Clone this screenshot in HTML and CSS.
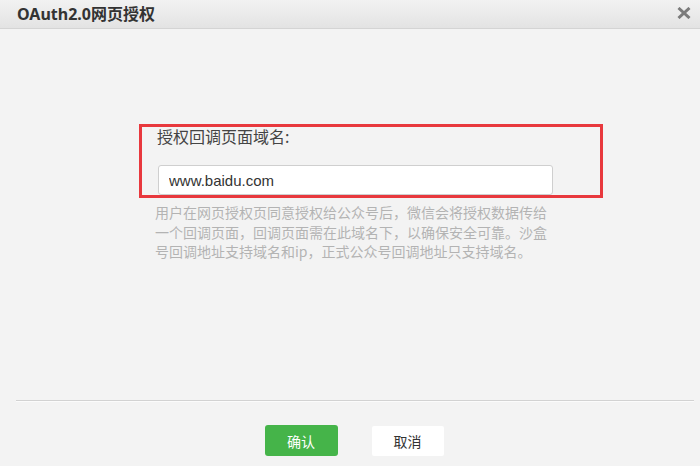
FILE: index.html
```html
<!DOCTYPE html>
<html lang="zh-CN">
<head>
<meta charset="utf-8">
<title>OAuth2.0网页授权</title>
<link rel="stylesheet" href="styles.css">
</head>
<body>
<div class="dialog">
  <div class="header">
    <h1 class="title">OAuth2.0网页授权</h1>
    <span class="close" aria-label="关闭">
      <svg width="14" height="12" viewBox="0 0 14 12"><path d="M1.5 1 L12.5 11 M12.5 1 L1.5 11" stroke="#7b7b7b" stroke-width="3" stroke-linecap="butt"/></svg>
    </span>
  </div>
  <div class="content">
    <div class="highlight">
      <div class="label">授权回调页面域名:</div>
      <input class="field" type="text" value="www.baidu.com">
    </div>
    <p class="help">用户在网页授权页同意授权给公众号后，微信会将授权数据传给一个回调页面，回调页面需在此域名下，以确保安全可靠。沙盒号回调地址支持域名和ip，正式公众号回调地址只支持域名。</p>
  </div>
  <div class="divider"></div>
  <div class="footer">
    <button class="btn btn-primary">确认</button>
    <button class="btn btn-default">取消</button>
  </div>
</div>
</body>
</html>
```
FILE: styles.css
```css
html, body {
  margin: 0;
  padding: 0;
  background: #f3f3f3;
}
body {
  font-family: "Noto Sans", "Noto Sans CJK SC", sans-serif;
  color: #333;
  width: 700px;
  height: 466px;
  overflow: hidden;
}
.dialog {
  display: flex;
  flex-direction: column;
  height: 466px;
}
.header {
  height: 28px;
  border-bottom: 1px solid #d4d4d4;
  background: linear-gradient(#f2f2f2, #e3e3e3);
  display: flex;
  align-items: center;
  justify-content: space-between;
  padding: 0 9px 0 17px;
}
.title {
  margin: 0;
  font-size: 16px;
  font-weight: bold;
  line-height: 24px;
  color: #333;
  font-family: "Noto Sans", "Noto Sans CJK SC", sans-serif;
}
.close {
  display: flex;
  width: 14px;
  height: 12px;
  margin-top: -2px;
}
.content {
  height: 371px;
  padding-top: 95px;
  box-sizing: border-box;
}
.highlight {
  margin-left: 139px;
  width: 458px;
  height: 68px;
  border: 3px solid #e8383d;
  box-sizing: content-box;
  display: flex;
  flex-direction: column;
  align-items: flex-start;
}
.label {
  margin-left: 15px;
  font-size: 16px;
  line-height: 18px;
  color: #444;
  font-family: "Noto Sans CJK SC", sans-serif;
}
.field {
  margin: 20px 0 0 16px;
  width: 395px;
  height: 30px;
  box-sizing: border-box;
  border: 1px solid #cfcfcf;
  border-radius: 3px;
  background: #fff;
  padding: 0 10px;
  font-family: "Liberation Sans", Arial, sans-serif;
  font-size: 15px;
  color: #333;
  outline: none;
}
.help {
  margin: 5px 0 0 155px;
  width: 395px;
  font-size: 14px;
  line-height: 19.5px;
  color: #b3b3b3;
  font-family: "Noto Sans CJK SC", sans-serif;
}
.divider {
  height: 1px;
  background: #d2d2d2;
  margin: 0 6px 0 16px;
  box-shadow: 0 1px 0 #fbfbfb;
}
.footer {
  display: flex;
  justify-content: center;
  align-items: flex-start;
  gap: 34px;
  padding: 24px 0 0 8px;
}
.btn {
  font-family: "Noto Sans CJK SC", sans-serif;
  font-size: 14px;
  border: none;
  border-radius: 3px;
  padding: 0;
  cursor: pointer;
}
.btn-primary {
  width: 73px;
  height: 31px;
  background: #45b449;
  color: #fff;
}
.btn-default {
  width: 72px;
  height: 30px;
  margin-top: 1px;
  background: #fff;
  color: #333;
  border-radius: 2px;
}
```
